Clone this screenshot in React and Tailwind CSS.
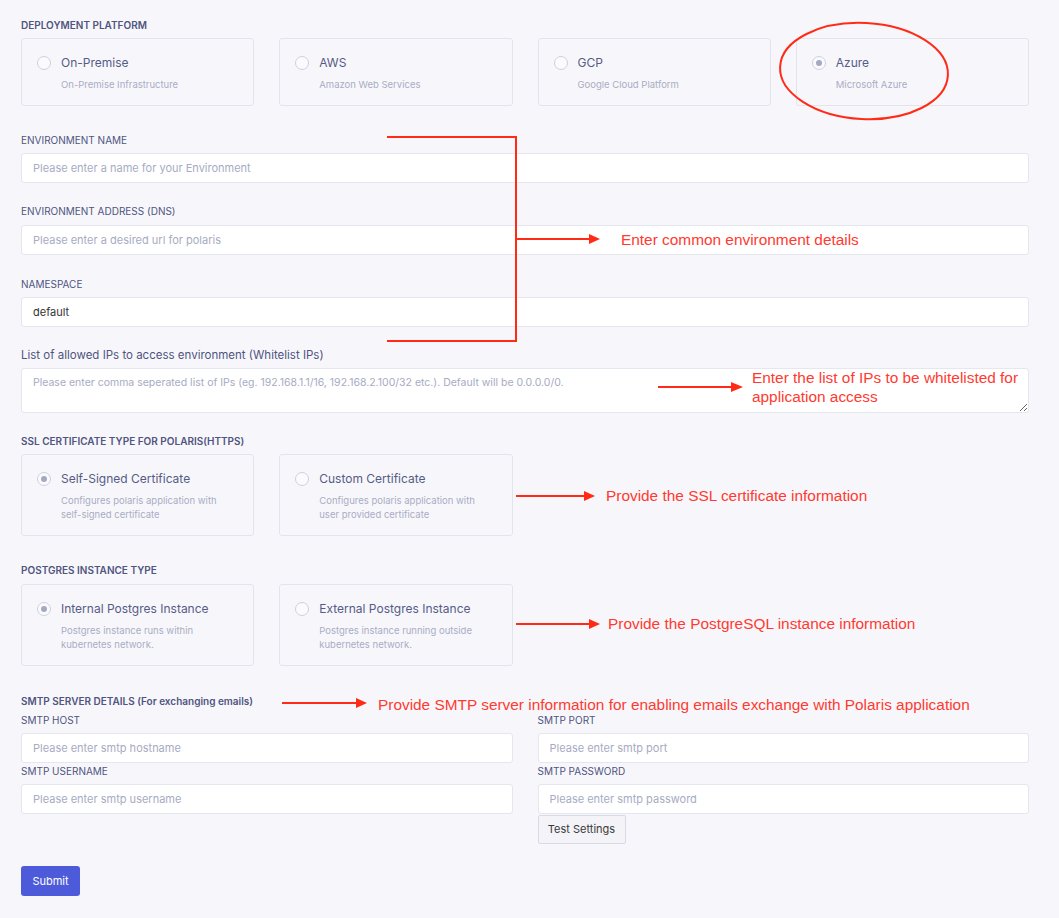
const deployOptions = [
  { title: 'On-Premise', sub: ['On-Premise Infrastructure'] },
  { title: 'AWS', sub: ['Amazon Web Services'] },
  { title: 'GCP', sub: ['Google Cloud Platform'] },
  { title: 'Azure', sub: ['Microsoft Azure'], checked: true },
]

const sslOptions = [
  { title: 'Self-Signed Certificate', sub: ['Configures polaris application with', 'self-signed certificate'], checked: true },
  { title: 'Custom Certificate', sub: ['Configures polaris application with', 'user provided certificate'] },
]

const pgOptions = [
  { title: 'Internal Postgres Instance', sub: ['Postgres instance runs within', 'kubernetes network.'], checked: true },
  { title: 'External Postgres Instance', sub: ['Postgres instance running outside', 'kubernetes network.'] },
]

function Radio({ checked }) {
  return (
    <span className="mt-[1px] flex h-[14px] w-[14px] shrink-0 items-center justify-center rounded-full border border-[#cdd0e1] bg-[#fbfbfd]">
      {checked && <span className="h-[6px] w-[6px] rounded-full bg-[#a4a8c2]" />}
    </span>
  )
}

function OptionCard({ opt, tall }) {
  return (
    <div className={`flex gap-[10px] rounded-[3px] border border-[#e3e4ee] bg-[#f7f7fb] pl-[15px] pr-3 pt-4 ${tall ? 'h-[82px]' : 'h-[68px]'}`}>
      <Radio checked={opt.checked} />
      <div>
        <div className="text-[12px] leading-[16px] text-[#565b86]">{opt.title}</div>
        <div className="mt-[7px] text-[9.5px] leading-[14px] text-[#a9acc4]">
          {opt.sub.map((s) => (
            <div key={s}>{s}</div>
          ))}
        </div>
      </div>
    </div>
  )
}

function Label({ children, bold, className = '' }) {
  return (
    <div className={`text-[10px] leading-[14px] text-[#4f5480] ${bold ? 'font-semibold' : ''} ${className}`}>
      {children}
    </div>
  )
}

function Input({ placeholder, value, className = '' }) {
  return (
    <input
      defaultValue={value}
      placeholder={placeholder}
      className={`h-[30px] w-full rounded-[3px] border border-[#e5e6ee] bg-white px-[11px] text-[11px] text-[#333] outline-none placeholder:text-[#a7abc3] ${className}`}
    />
  )
}

function Annotations() {
  const red = '#ff2b17'
  return (
    <>
      <svg className="pointer-events-none absolute left-0 top-0" width="1059" height="918">
        <ellipse cx="864" cy="71" rx="84" ry="48" fill="none" stroke={red} strokeWidth="2" transform="rotate(3 864 71)" />
        <polyline points="387,137 516,137 516,341 387,341" fill="none" stroke={red} strokeWidth="2" />
        <line x1="516" y1="239" x2="591" y2="239" stroke={red} strokeWidth="2" />
        <polygon points="589,234 600,239 589,244" fill={red} />
        <line x1="658" y1="387" x2="734" y2="387" stroke={red} strokeWidth="2" />
        <polygon points="731,382 743,387 731,392" fill={red} />
        <line x1="516" y1="496" x2="586" y2="496" stroke={red} strokeWidth="2" />
        <polygon points="584,491 595,496 584,501" fill={red} />
        <line x1="516" y1="624" x2="591" y2="624" stroke={red} strokeWidth="2" />
        <polygon points="589,619 600,624 589,629" fill={red} />
        <line x1="282" y1="703" x2="358" y2="703" stroke={red} strokeWidth="2" />
        <polygon points="356,698 367,703 356,708" fill={red} />
      </svg>
      <div className="pointer-events-none absolute inset-0 font-['Liberation_Sans',Arial,sans-serif] text-[15.4px] leading-[18px] text-[#ff3a30]">
        <span className="absolute left-[621px] top-[231px] whitespace-nowrap">Enter common environment details</span>
        <span className="absolute left-[752px] top-[368px] whitespace-nowrap leading-[19px]">
          Enter the list of IPs to be whitelisted for
          <br />
          application access
        </span>
        <span className="absolute left-[606px] top-[487px] whitespace-nowrap">Provide the SSL certificate information</span>
        <span className="absolute left-[608px] top-[615px] whitespace-nowrap">Provide the PostgreSQL instance information</span>
        <span className="absolute left-[378px] top-[696px] whitespace-nowrap">
          Provide SMTP server information for enabling emails exchange with Polaris application
        </span>
      </div>
    </>
  )
}

export default function App() {
  return (
    <div className="relative min-h-[918px] w-full bg-[#f7f7fb] font-['Inter','Noto_Sans',sans-serif]">
      <form className="flex w-[1038px] flex-col pl-[21px] pr-[9px] pt-[18px] pb-[23px]" onSubmit={(e) => e.preventDefault()}>
        <Label bold>DEPLOYMENT PLATFORM</Label>
        <div className="mt-[6px] grid grid-cols-4 gap-[25px]">
          {deployOptions.map((o) => (
            <OptionCard key={o.title} opt={o} />
          ))}
        </div>

        <Label className="mt-[27px]">ENVIRONMENT NAME</Label>
        <Input className="mt-[6px]" placeholder="Please enter a name for your Environment" />

        <Label className="mt-[21px]">ENVIRONMENT ADDRESS (DNS)</Label>
        <Input className="mt-[7px]" placeholder="Please enter a desired url for polaris" />

        <Label className="mt-[22px]">NAMESPACE</Label>
        <Input className="mt-[6px]" value="default" />

        <div className="mt-[20px] text-[11.5px] leading-[16px] text-[#4f5480]">
          List of allowed IPs to access environment (Whitelist IPs)
        </div>
        <textarea
          className="mt-[5px] h-[45px] w-full rounded-[3px] border border-[#e5e6ee] bg-white px-[11px] py-[6px] text-[10.5px] text-[#333] outline-none placeholder:text-[#a7abc3]"
          placeholder="Please enter comma seperated list of IPs (eg. 192.168.1.1/16, 192.168.2.100/32 etc.). Default will be 0.0.0.0/0."
        />

        <Label bold className="mt-[21px]">SSL CERTIFICATE TYPE FOR POLARIS(HTTPS)</Label>
        <div className="mt-[6px] grid grid-cols-4 gap-[25px]">
          {sslOptions.map((o) => (
            <OptionCard key={o.title} opt={o} tall />
          ))}
        </div>

        <Label bold className="mt-[27px]">POSTGRES INSTANCE TYPE</Label>
        <div className="mt-[7px] grid grid-cols-4 gap-[25px]">
          {pgOptions.map((o) => (
            <OptionCard key={o.title} opt={o} tall />
          ))}
        </div>

        <Label bold className="mt-[28px]">SMTP SERVER DETAILS (For exchanging emails)</Label>
        <div className="mt-[5px] grid grid-cols-2 gap-x-[25px]">
          <div>
            <Label>SMTP HOST</Label>
            <Input className="mt-[6px]" placeholder="Please enter smtp hostname" />
            <Label className="mt-[1px]">SMTP USERNAME</Label>
            <Input className="mt-[6px]" placeholder="Please enter smtp username" />
          </div>
          <div>
            <Label>SMTP PORT</Label>
            <Input className="mt-[6px]" placeholder="Please enter smtp port" />
            <Label className="mt-[1px]">SMTP PASSWORD</Label>
            <Input className="mt-[6px]" placeholder="Please enter smtp password" />
            <button
              type="button"
              className="mt-[1px] h-[29px] w-[88px] rounded-[2px] border border-[#d9dae8] bg-[#f3f3f8] text-[11px] text-[#3a3a3a]"
            >
              Test Settings
            </button>
          </div>
        </div>

        <div className="mt-[22px]">
          <button type="submit" className="h-[30px] w-[59px] rounded-[3px] bg-[#4d5bdb] text-[11px] text-white">
            Submit
          </button>
        </div>
      </form>
      <Annotations />
    </div>
  )
}
